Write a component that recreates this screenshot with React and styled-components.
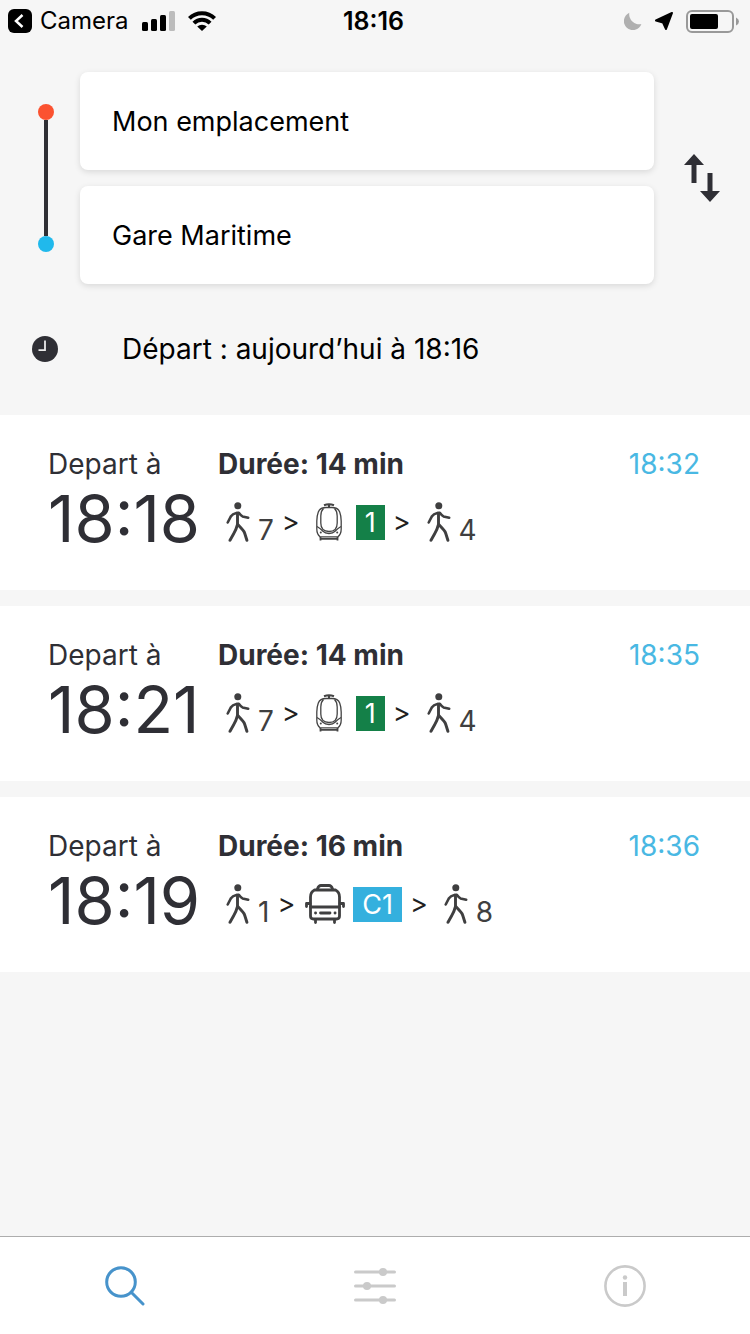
import React, { useState } from "react";
import styled, { createGlobalStyle } from "styled-components";

const GlobalStyle = createGlobalStyle`
  *, *::before, *::after { box-sizing: border-box; }
  body {
    margin: 0;
    background: #f6f6f6;
    color: #2f2f35;
    font-family: Inter, "Liberation Sans", sans-serif;
    font-size: 28px;
    line-height: 32px;
  }
  button, input { font: inherit; color: inherit; }
`;

const Screen = styled.div`
  display: flex;
  flex-direction: column;
  min-height: 100vh;
`;

const StatusBar = styled.header`
  display: grid;
  grid-template-columns: 1fr auto 1fr;
  align-items: center;
  height: 42px;
  padding: 0 11px 0 8px;
  color: #000;
  font-size: 24px;
`;

const StatusGroup = styled.div`
  display: flex;
  align-items: center;
  justify-content: ${(p) => (p.$end ? "flex-end" : "flex-start")};
  gap: 13px;
`;

const BackLink = styled.a`
  display: flex;
  align-items: center;
  gap: 8px;
  color: inherit;
  text-decoration: none;
`;

const StatusTime = styled.time`
  font-size: 25px;
  font-weight: 600;
`;

const Planner = styled.form`
  padding: 30px 0 33px;
  color: #000;
`;

const RouteRow = styled.div`
  display: grid;
  grid-template-columns: 80px 1fr 96px;
  align-items: center;
`;

const Rail = styled.div`
  display: flex;
  flex-direction: column;
  align-items: center;
  width: 16px;
  height: 148px;
  margin-left: 38px;
`;

const Dot = styled.span`
  width: 16px;
  height: 16px;
  border-radius: 50%;
  background: ${(p) => p.$color};
`;

const RailLine = styled.span`
  flex: 1;
  width: 4px;
  background: #2f2f35;
`;

const Fields = styled.div`
  display: flex;
  flex-direction: column;
  gap: 16px;
`;

const PlaceInput = styled.input`
  width: 100%;
  height: 98px;
  padding: 0 32px;
  border: 0;
  border-radius: 8px;
  outline: 0;
  background: #fff;
  box-shadow: 0 2px 6px rgba(0, 0, 0, 0.12);
  font-size: 27px;
`;

const PlainButton = styled.button`
  display: flex;
  align-items: center;
  justify-content: center;
  padding: 0;
  border: 0;
  background: none;
  cursor: pointer;
`;

const DepartureButton = styled(PlainButton)`
  justify-content: flex-start;
  gap: 64px;
  width: 100%;
  margin-top: 32px;
  padding: 17px 32px;
`;

const Results = styled.main`
  flex: 1;
  display: flex;
  flex-direction: column;
  gap: 16px;
`;

const Trip = styled.article`
  display: flex;
  align-items: flex-start;
  padding: 33px 50px 32px 48px;
  background: #fff;
`;

const Departure = styled.div`
  min-width: 170px;
`;

const DepartureTime = styled.time`
  display: block;
  font-size: 65px;
  line-height: 78px;
`;

const Details = styled.div`
  flex: 1;
  display: flex;
  flex-direction: column;
  gap: 22px;
`;

const Duration = styled.strong`
  font-weight: 700;
`;

const Legs = styled.div`
  display: flex;
  align-items: center;
  height: 40px;
  padding-left: 8px;
`;

const Walk = styled.span`
  display: flex;
  align-items: flex-end;
  gap: 8px;
  height: 40px;
  color: #3f3f40;
  line-height: 24px;
`;

const Separator = styled.span`
  padding: 0 ${(p) => (p.$wide ? 16 : 10)}px 0 8px;
  color: #1f1f22;
  font-size: 27px;
`;

const Ride = styled.span`
  display: flex;
  align-items: center;
  gap: ${(p) => (p.$bus ? 8 : 14)}px;
`;

const LineBadge = styled.span`
  padding: 0 9px;
  background: ${(p) => p.$color};
  color: #fff;
  font-size: 27px;
  line-height: 35px;
`;

const Arrival = styled.time`
  color: #49b8e3;
`;

const TabBar = styled.nav`
  display: grid;
  grid-template-columns: repeat(3, 1fr);
  height: 98px;
  border-top: 1px solid #adadad;
  background: #fff;
`;

const Tab = styled(PlainButton)`
  color: ${(p) => (p.$active ? "#4793cb" : "#cacaca")};
`;

const BackIcon = () => (
  <svg width="24" height="24" viewBox="0 0 24 24" aria-hidden="true">
    <rect width="24" height="24" rx="6" fill="#000" />
    <path d="M14.500 6 8 12l6.500 6" fill="none" stroke="#fff" strokeWidth="2.500" />
  </svg>
);

const SignalIcon = () => (
  <svg width="33" height="20" viewBox="0 0 33 20" aria-hidden="true">
    <rect x="0" y="11" width="6" height="9" rx="1.500" />
    <rect x="9" y="8" width="6" height="12" rx="1.500" />
    <rect x="18" y="4" width="6" height="16" rx="1.500" />
    <rect x="27" y="0" width="6" height="20" rx="1.500" fill="#bcbcbc" />
  </svg>
);

const WifiIcon = () => (
  <svg width="28" height="20" viewBox="0 0 28 20" aria-hidden="true">
    <g fill="none" stroke="#000" strokeWidth="4">
      <path d="M1.400 7.400a18 18 0 0 1 25.200 0" />
      <path d="M5.900 12.200a11.500 11.500 0 0 1 16.200 0" />
    </g>
    <path d="M14 20 9.200 15.600a7 7 0 0 1 9.600 0z" />
  </svg>
);

const MoonIcon = () => (
  <svg width="18" height="18" viewBox="0 0 18 18" aria-hidden="true">
    <path d="M5.300.8a9 9 0 1 0 12.100 11.200A10 10 0 0 1 5.300.8z" fill="#b0b0b0" />
  </svg>
);

const LocationIcon = () => (
  <svg width="18" height="18" viewBox="0 0 18 18" aria-hidden="true">
    <path d="M17 1 11 17 8 10.500 1 8.500z" stroke="#000" strokeWidth="2" strokeLinejoin="round" />
  </svg>
);

const BatteryIcon = () => (
  <svg width="53" height="23" viewBox="0 0 53 23" aria-hidden="true">
    <rect x="1" y="1" width="46" height="21" rx="5" fill="none" stroke="#999" strokeWidth="2" />
    <rect x="4" y="4" width="28" height="15" rx="2" />
    <path d="M50 7.500q3 1.500 3 4t-3 4z" fill="#999" />
  </svg>
);

const SwapIcon = () => (
  <svg width="36" height="48" viewBox="0 0 36 48" fill="#2f2f35" aria-hidden="true">
    <path d="M10 0 20 11h-7.500v18h-5V11H0z" />
    <path d="M26 48 16 37h7.500V19h5v18H36z" />
  </svg>
);

const ClockIcon = () => (
  <svg width="26" height="26" viewBox="0 0 26 26" aria-hidden="true">
    <circle cx="13" cy="13" r="13" fill="#2f2f35" />
    <path d="M13 4.500v9.700H6.500" fill="none" stroke="#ececec" strokeWidth="1.800" />
  </svg>
);

const WalkIcon = () => (
  <svg
    width="24" height="40" viewBox="0 0 24 40" fill="none" stroke="#3f3f40"
    strokeWidth="2.600" strokeLinecap="round" strokeLinejoin="round" aria-hidden="true"
  >
    <circle cx="11.800" cy="3.800" r="3.500" fill="#3f3f40" stroke="none" />
    <path d="M10.500 11Q6.500 12 5 14.200L1.700 20.500" />
    <path d="M12.800 10.800q2 2.800 3.700 3.600l5.700 1.400" />
    <path d="M11.500 11v11.500Q10 28 7.800 31.500L4 38.300" strokeWidth="2.900" />
    <path d="M11.800 22.500l4.600 5q1.600 1.600 2.300 3.800l2.200 7" strokeWidth="2.900" />
  </svg>
);

const TramIcon = () => (
  <svg
    width="26" height="38" viewBox="0 0 26 38" fill="none" stroke="#444"
    strokeWidth="1.300" aria-hidden="true"
  >
    <path d="M8 2.200Q13 .2 18 2.200M13 1.500v3" strokeWidth="2" />
    <path d="M10 4.500h6q6 0 7.700 4.500Q25.200 13 25.200 18v8q0 5-3.200 7.800H4Q.8 31 .8 26v-8q0-5 1.500-9Q4 4.500 10 4.500z" />
    <path d="M7.500 5.500Q4.800 8 4.800 13v7q0 8.500 8.200 8.500t8.200-8.500v-7q0-5-2.700-7.500" />
    <path d="M1 23.500Q4.500 25.500 7 28.300 9 30.500 13 30.500t6-2.200q2.500-2.800 6-4.800" />
    <circle cx="4.800" cy="29.500" r="1" fill="#444" stroke="none" />
    <circle cx="21.200" cy="29.500" r="1" fill="#444" stroke="none" />
    <path d="M4.500 34v3.500M21.500 34v3.500M4.500 35.800h17" strokeWidth="1.800" />
  </svg>
);

const BusIcon = () => (
  <svg
    width="40" height="40" viewBox="0 0 40 40" fill="none" stroke="#3f3f40"
    strokeWidth="2.800" strokeLinecap="round" strokeLinejoin="round" aria-hidden="true"
  >
    <path d="M12.500 5.500V5Q13.500 1.500 16 1.500h8q2.500 0 3.500 3.500v.5" />
    <path d="M9.500 6h21q4 2 4 7v19q0 3-3 3h-23q-3 0-3-3V13q0-5 4-7z" />
    <path d="M5.500 23h29M5 19.500H1.500V22.500M35 19.500h3.500V22.500M10.500 35.500v3M29.500 35.500v3" />
    <path d="M15.500 29h9.500M10.500 29h.1M30 29h.1" />
  </svg>
);

const SearchIcon = () => (
  <svg
    width="40" height="40" viewBox="0 0 40 40" fill="none" stroke="currentColor"
    strokeWidth="3" strokeLinecap="round" aria-hidden="true"
  >
    <circle cx="16" cy="16" r="14.300" />
    <path d="M26.500 26.500 38 38" />
  </svg>
);

const FiltersIcon = () => (
  <svg width="42" height="36" viewBox="0 0 42 36" fill="currentColor" aria-hidden="true">
    <path
      d="M1.500 4h39M1.500 18h39M1.500 32h39"
      stroke="currentColor" strokeWidth="3" strokeLinecap="round"
    />
    <circle cx="29" cy="4" r="4" />
    <circle cx="13" cy="18" r="4" />
    <circle cx="29" cy="32" r="4" />
  </svg>
);

const InfoIcon = () => (
  <svg
    width="42" height="42" viewBox="0 0 42 42" fill="none" stroke="currentColor"
    strokeWidth="2.600" aria-hidden="true"
  >
    <circle cx="21" cy="21" r="19.600" />
    <circle cx="21" cy="12.500" r="2.200" fill="currentColor" stroke="none" />
    <path d="M21 17v14" strokeWidth="4" />
  </svg>
);

const trips = [
  { leaves: "18:18", arrives: "18:32", minutes: 14, before: 7, after: 4, line: "1", color: "#148048" },
  { leaves: "18:21", arrives: "18:35", minutes: 14, before: 7, after: 4, line: "1", color: "#148048" },
  { leaves: "18:19", arrives: "18:36", minutes: 16, before: 1, after: 8, line: "C1", color: "#34b0de", bus: true },
];

const WalkLeg = ({ minutes }) => (
  <Walk>
    <WalkIcon />
    {minutes}
  </Walk>
);

const TripCard = ({ trip }) => (
  <Trip>
    <Departure>
      Depart à
      <DepartureTime>{trip.leaves}</DepartureTime>
    </Departure>
    <Details>
      <Duration>Durée: {trip.minutes} min</Duration>
      <Legs>
        <WalkLeg minutes={trip.before} />
        <Separator $wide={!trip.bus}>&gt;</Separator>
        <Ride $bus={trip.bus}>
          {trip.bus ? <BusIcon /> : <TramIcon />}
          <LineBadge $color={trip.color}>{trip.line}</LineBadge>
        </Ride>
        <Separator $wide>&gt;</Separator>
        <WalkLeg minutes={trip.after} />
      </Legs>
    </Details>
    <Arrival>{trip.arrives}</Arrival>
  </Trip>
);

export default function App() {
  const [from, setFrom] = useState("Mon emplacement");
  const [to, setTo] = useState("Gare Maritime");
  const [tab, setTab] = useState("search");

  const swap = () => {
    setFrom(to);
    setTo(from);
  };

  return (
    <Screen>
      <GlobalStyle />
      <StatusBar>
        <StatusGroup>
          <BackLink href="#camera">
            <BackIcon />
            Camera
          </BackLink>
          <SignalIcon />
          <WifiIcon />
        </StatusGroup>
        <StatusTime>18:16</StatusTime>
        <StatusGroup $end>
          <MoonIcon />
          <LocationIcon />
          <BatteryIcon />
        </StatusGroup>
      </StatusBar>

      <Planner onSubmit={(e) => e.preventDefault()}>
        <RouteRow>
          <Rail>
            <Dot $color="#fb5230" />
            <RailLine />
            <Dot $color="#20b9ec" />
          </Rail>
          <Fields>
            <PlaceInput aria-label="Départ" value={from} onChange={(e) => setFrom(e.target.value)} />
            <PlaceInput aria-label="Arrivée" value={to} onChange={(e) => setTo(e.target.value)} />
          </Fields>
          <PlainButton type="button" aria-label="Inverser" onClick={swap}>
            <SwapIcon />
          </PlainButton>
        </RouteRow>
        <DepartureButton type="button">
          <ClockIcon />
          Départ : aujourd’hui à 18:16
        </DepartureButton>
      </Planner>

      <Results>
        {trips.map((trip) => (
          <TripCard key={trip.leaves} trip={trip} />
        ))}
      </Results>

      <TabBar>
        <Tab aria-label="Rechercher" $active={tab === "search"} onClick={() => setTab("search")}>
          <SearchIcon />
        </Tab>
        <Tab aria-label="Filtres" $active={tab === "filters"} onClick={() => setTab("filters")}>
          <FiltersIcon />
        </Tab>
        <Tab aria-label="Informations" $active={tab === "info"} onClick={() => setTab("info")}>
          <InfoIcon />
        </Tab>
      </TabBar>
    </Screen>
  );
}
